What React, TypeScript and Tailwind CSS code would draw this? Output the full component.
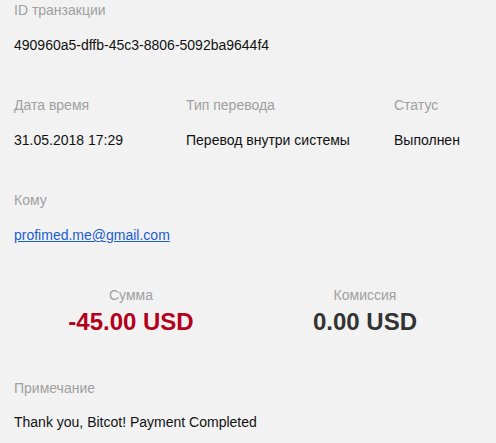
export default function App() {
  return (
    <div className="w-[496px] h-[443px] overflow-hidden bg-[#f2f2f2] px-[14px] text-[14px] leading-[16px] font-['Liberation_Sans',Arial,sans-serif]">
      <div className="pt-[2px] text-[#a0a0a0]">ID транзакции</div>
      <div className="mt-[19px] text-[#111]">490960a5-dffb-45c3-8806-5092ba9644f4</div>

      <div className="mt-[44px] flex text-[#a0a0a0]">
        <div className="w-[172px]">Дата время</div>
        <div className="w-[208px]">Тип перевода</div>
        <div>Статус</div>
      </div>
      <div className="mt-[19px] flex text-[#111]">
        <div className="w-[172px]">31.05.2018 17:29</div>
        <div className="w-[208px]">Перевод внутри системы</div>
        <div>Выполнен</div>
      </div>

      <div className="mt-[44px] text-[#a0a0a0]">Кому</div>
      <div className="mt-[19px]">
        <a href="#" className="text-[#1a5dd0] underline">profimed.me@gmail.com</a>
      </div>

      <div className="mt-[44px] grid grid-cols-2 text-center">
        <div>
          <div className="text-[#a0a0a0]">Сумма</div>
          <div className="mt-[5px] text-[24px] leading-[28px] font-bold text-[#b3001b]">-45.00 USD</div>
        </div>
        <div>
          <div className="text-[#a0a0a0]">Комиссия</div>
          <div className="mt-[5px] text-[24px] leading-[28px] font-bold text-[#333]">0.00 USD</div>
        </div>
      </div>

      <div className="mt-[44px] text-[#a0a0a0]">Примечание</div>
      <div className="mt-[18px] text-[#111]">Thank you, Bitcot! Payment Completed</div>
    </div>
  )
}
